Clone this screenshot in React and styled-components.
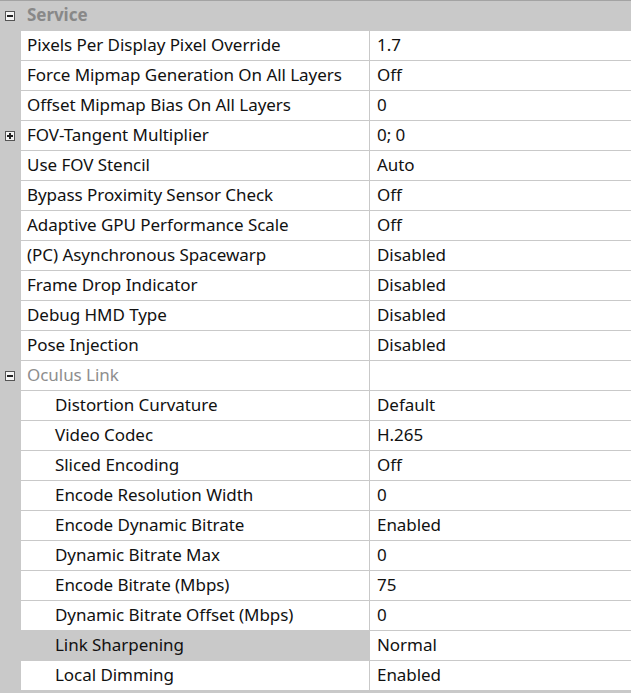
import styled, { createGlobalStyle } from "styled-components";

const GlobalStyle = createGlobalStyle`
  html, body {
    margin: 0;
    padding: 0;
    background: #ffffff;
  }
  body {
    font-family: "Noto Sans", "Open Sans", sans-serif;
  }
`;

const Grid = styled.div`
  width: 631px;
  height: 693px;
  background: #c9c9c9;
  border-top: 1px solid #a3a3a3;
  display: flex;
  flex-direction: column;
  gap: 1px;
  box-sizing: border-box;
  overflow: hidden;
`;

const Row = styled.div`
  display: grid;
  grid-template-columns: 21px 348px 1fr;
  height: 29px;
  background: #c9c9c9;
`;

const Margin = styled.div`
  display: flex;
  align-items: center;
  justify-content: center;
  padding-right: 1px;
`;

const NameCell = styled.div`
  display: flex;
  align-items: center;
  padding-left: ${(p) => (p.$indent ? "34px" : "6px")};
  padding-bottom: 2px;
  background: ${(p) => (p.$category ? "transparent" : p.$selected ? "#c9c9c9" : "#ffffff")};
  color: ${(p) => (p.$category ? "#888888" : p.$muted ? "#8e8e8e" : "#111111")};
  font-weight: ${(p) => (p.$category ? 700 : 400)};
  font-size: 17px;
  letter-spacing: -0.05px;
  white-space: nowrap;
  overflow: hidden;
`;

const ValueCell = styled.div`
  display: flex;
  align-items: center;
  margin-left: 1px;
  padding-left: 7px;
  padding-bottom: 2px;
  background: ${(p) => (p.$category ? "transparent" : "#ffffff")};
  color: #111111;
  font-size: 17px;
  letter-spacing: -0.05px;
  white-space: nowrap;
`;

const Toggle = styled.div`
  width: 10px;
  height: 10px;
  box-sizing: border-box;
  border: 1px solid #555555;
  background: #f4f4f4;
  position: relative;
  &::before {
    content: "";
    position: absolute;
    left: 1px;
    right: 1px;
    top: 3px;
    height: 2px;
    background: #222;
  }
  &::after {
    content: "";
    position: absolute;
    top: 1px;
    bottom: 1px;
    left: 3px;
    width: 2px;
    background: #222;
    display: ${(p) => (p.$open ? "none" : "block")};
  }
`;

const rows = [
  { name: "Service", category: true, open: true },
  { name: "Pixels Per Display Pixel Override", value: "1.7" },
  { name: "Force Mipmap Generation On All Layers", value: "Off" },
  { name: "Offset Mipmap Bias On All Layers", value: "0" },
  { name: "FOV-Tangent Multiplier", value: "0; 0", toggle: "closed" },
  { name: "Use FOV Stencil", value: "Auto" },
  { name: "Bypass Proximity Sensor Check", value: "Off" },
  { name: "Adaptive GPU Performance Scale", value: "Off" },
  { name: "(PC) Asynchronous Spacewarp", value: "Disabled" },
  { name: "Frame Drop Indicator", value: "Disabled" },
  { name: "Debug HMD Type", value: "Disabled" },
  { name: "Pose Injection", value: "Disabled" },
  { name: "Oculus Link", value: "", toggle: "open", muted: true },
  { name: "Distortion Curvature", value: "Default", indent: true },
  { name: "Video Codec", value: "H.265", indent: true },
  { name: "Sliced Encoding", value: "Off", indent: true },
  { name: "Encode Resolution Width", value: "0", indent: true },
  { name: "Encode Dynamic Bitrate", value: "Enabled", indent: true },
  { name: "Dynamic Bitrate Max", value: "0", indent: true },
  { name: "Encode Bitrate (Mbps)", value: "75", indent: true },
  { name: "Dynamic Bitrate Offset (Mbps)", value: "0", indent: true },
  { name: "Link Sharpening", value: "Normal", indent: true, selected: true },
  { name: "Local Dimming", value: "Enabled", indent: true },
];

export default function App() {
  return (
    <>
      <GlobalStyle />
      <Grid>
        {rows.map((r) => (
          <Row key={r.name}>
            <Margin>
              {r.category && <Toggle $open />}
              {r.toggle && <Toggle $open={r.toggle === "open"} />}
            </Margin>
            <NameCell
              $category={r.category}
              $indent={r.indent}
              $selected={r.selected}
              $muted={r.muted}
            >
              {r.name}
            </NameCell>
            <ValueCell $category={r.category}>{r.value}</ValueCell>
          </Row>
        ))}
      </Grid>
    </>
  );
}
